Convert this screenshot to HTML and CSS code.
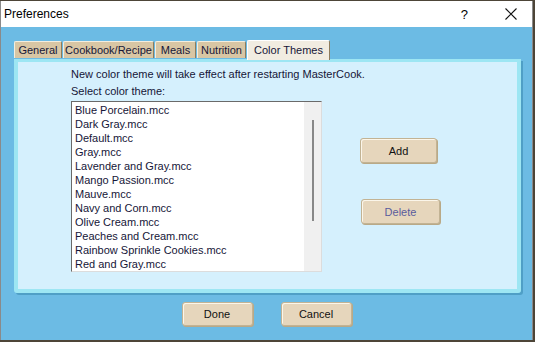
FILE: index.html
```html
<!DOCTYPE html>
<html lang="en">

<head>
    <meta charset="UTF-8">
    <title>Preferences</title>
    <link rel="stylesheet" href="styles.css">
</head>

<body>
    <div class="window">
        <div class="titlebar">
            <span class="title">Preferences</span>
            <div class="controls">
                <span class="help">?</span>
                <svg class="close" width="12" height="12" viewBox="0 0 12 12">
                    <path d="M0.5 0.5 L11.5 11.5 M11.5 0.5 L0.5 11.5" stroke="#111" stroke-width="1.1" fill="none" />
                </svg>
            </div>
        </div>
        <div class="client">
            <div class="tabs">
                <div class="tab tab-general">General</div>
                <div class="tab tab-cookbook">Cookbook/Recipe</div>
                <div class="tab tab-meals">Meals</div>
                <div class="tab tab-nutrition">Nutrition</div>
                <div class="tab active">Color Themes</div>
            </div>
            <div class="panel">
                <div class="panelInner">
                    <p class="note">New color theme will take effect after restarting MasterCook.</p>
                    <p class="note">Select color theme:</p>
                    <div class="row">
                        <div class="listbox">
                            <ul class="items">
                                <li>Blue Porcelain.mcc</li>
                                <li>Dark Gray.mcc</li>
                                <li>Default.mcc</li>
                                <li>Gray.mcc</li>
                                <li>Lavender and Gray.mcc</li>
                                <li>Mango Passion.mcc</li>
                                <li>Mauve.mcc</li>
                                <li>Navy and Corn.mcc</li>
                                <li>Olive Cream.mcc</li>
                                <li>Peaches and Cream.mcc</li>
                                <li>Rainbow Sprinkle Cookies.mcc</li>
                                <li>Red and Gray.mcc</li>
                            </ul>
                            <div class="scrollbar">
                                <div class="thumb"></div>
                            </div>
                        </div>
                        <div class="sideButtons">
                            <button class="btn btn-add">Add</button>
                            <button class="btn btn-delete">Delete</button>
                        </div>
                    </div>
                </div>
            </div>
            <div class="footer">
                <button class="btn btn-foot">Done</button>
                <button class="btn btn-foot">Cancel</button>
            </div>
        </div>
    </div>
</body>

</html>
```

FILE: styles.css
```css
* {
    margin: 0;
    padding: 0;
    box-sizing: border-box;
}

body {
    width: 535px;
    height: 342px;
    overflow: hidden;
    background-color: #4d4538;
    font-family: "Liberation Sans", Arial, sans-serif;
}

.window {
    width: 533px;
    height: 339px;
    margin-top: 1px;
    display: flex;
    flex-direction: column;
    background-color: #6cbbe4;
    border-left: 1px solid #8a8a8a;
    border-right: 1px solid #8a8a8a;
}

.titlebar {
    height: 26px;
    background-color: #ffffff;
    display: flex;
    align-items: center;
    justify-content: space-between;
    padding-left: 3px;
    font-size: 12px;
    color: #000;
}

.controls {
    display: flex;
    align-items: center;
}

.help {
    font-size: 13px;
    margin-right: 37px;
}

.close {
    margin-right: 15px;
}

.client {
    flex: 1;
    padding: 12px 0 0 13px;
}

.tabs {
    display: flex;
    align-items: flex-end;
    height: 20px;
    position: relative;
    z-index: 2;
}

.tab {
    height: 17px;
    margin-bottom: 1px;
    background-color: #d8c6a4;
    border: 1px solid #f4eedf;
    border-right-color: #8e7c5c;
    border-bottom: none;
    border-radius: 2px 2px 0 0;
    font-size: 11px;
    line-height: 16px;
    color: #161638;
    text-align: center;
    margin-right: 1px;
}

.tab-general {
    width: 48px;
}

.tab-cookbook {
    width: 91px;
}

.tab-meals {
    width: 41px;
}

.tab-nutrition {
    width: 49px;
}

.tab.active {
    width: 83px;
    height: 20px;
    margin-bottom: -1px;
    background-color: #f1ece1;
    border-color: #ffffff;
    border-right-color: #8e7c5c;
    line-height: 19px;
}

.panel {
    width: 507px;
    height: 234px;
    border: 4px solid #9de6f3;
    border-top-width: 3px;
    border-radius: 0 0 3px 3px;
    box-shadow: 2px 2px 0 #4f9fc6;
}

.panelInner {
    height: 100%;
    background-color: #d5f0fd;
    padding: 4px 0 0 53px;
}

.note {
    font-size: 11px;
    line-height: 17px;
    color: #161638;
}

.row {
    display: flex;
    margin-top: 1px;
}

.listbox {
    width: 251px;
    height: 171px;
    display: flex;
    background-color: #ffffff;
    border: 1px solid #dcdcdc;
    border-top-color: #6a6a6a;
    border-left-color: #6a6a6a;
    overflow: hidden;
}

.items {
    flex: 1;
    list-style: none;
    padding: 1px 0 0 3px;
}

.items li {
    font-size: 11px;
    line-height: 14px;
    color: #161638;
    white-space: nowrap;
}

.scrollbar {
    width: 17px;
    background-color: #f0f0f0;
    display: flex;
    justify-content: center;
}

.thumb {
    width: 2px;
    height: 101px;
    margin-top: 18px;
    background-color: #888888;
}

.sideButtons {
    display: flex;
    flex-direction: column;
    align-items: flex-start;
    padding-left: 38px;
}

.btn {
    height: 25px;
    font-family: "Liberation Sans", Arial, sans-serif;
    font-size: 11px;
    color: #111;
    background-color: #e6d6bc;
    border: 1px solid #c2b394;
    border-radius: 3px;
    box-shadow: inset 1px 1px 0 #fbf6ea, 1px 1px 0 #b9a987;
}

.btn-add {
    width: 77px;
    margin-top: 37px;
}

.btn-delete {
    width: 79px;
    margin-top: 36px;
    margin-left: 1px;
    color: #5a5c9c;
}

.footer {
    display: flex;
    justify-content: center;
    gap: 28px;
    margin-top: 9px;
    padding-right: 13px;
}

.btn-foot {
    width: 71px;
    height: 24px;
}
```
